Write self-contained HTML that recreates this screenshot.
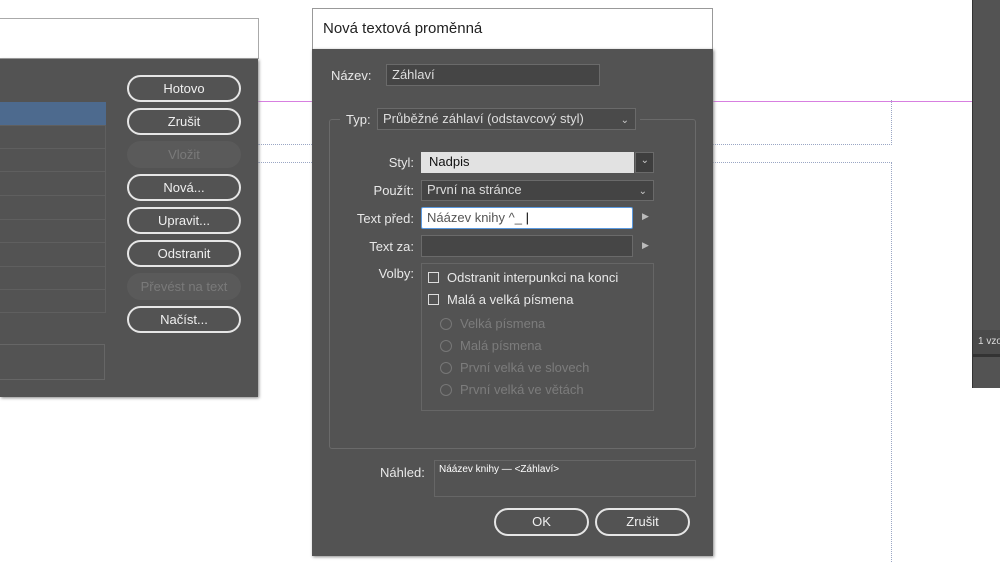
<!DOCTYPE html>
<html><head><meta charset="utf-8"><style>
body{margin:0;width:1000px;height:562px;background:#fff;position:relative;overflow:hidden;font-family:"Liberation Sans",sans-serif;font-size:13px;color:#e8e8e8}
.a{position:absolute;box-sizing:border-box}
.dk{background:#535353}
.btn{position:absolute;box-sizing:border-box;border:2px solid #e6e6e6;border-radius:14px;text-align:center;color:#f0f0f0;font-size:13px}
.dis{border:none;background:#5a5a5a;color:#7a7a7a}
.inp{position:absolute;box-sizing:border-box;background:#454545;border:1px solid #6a6a6a;color:#ddd;padding-left:5px}
.lbl{position:absolute;text-align:right;color:#e8e8e8}
.chev{position:absolute;right:6px;top:2px;font-size:10px;color:#ccc}
.cb{position:absolute;width:11px;height:11px;border:1px solid #ddd;box-sizing:border-box}
.rd{position:absolute;width:12px;height:12px;border:1px solid #777;border-radius:50%;box-sizing:border-box}
.gt{position:absolute;color:#7c7c7c}
</style></head><body>
<div class="a" style="left:258px;top:101px;width:714px;height:1px;background:#d77fe0"></div>
<div class="a" style="left:258px;top:144px;width:634px;border-top:1px dotted #9aa6c4"></div>
<div class="a" style="left:258px;top:162px;width:634px;border-top:1px dotted #9aa6c4"></div>
<div class="a" style="left:891px;top:100px;height:45px;border-left:1px dotted #9aa6c4"></div>
<div class="a" style="left:891px;top:162px;height:400px;border-left:1px dotted #9aa6c4"></div>
<div class="a dk" style="left:972px;top:0;width:28px;height:388px;border-left:1px solid #333"></div>
<div class="a" style="left:973px;top:330px;width:27px;height:24px;background:#4a4a4a;font-size:10px;padding:6px 0 0 5px;color:#ddd;white-space:nowrap;overflow:hidden">1 vzo</div>
<div class="a" style="left:973px;top:354px;width:27px;height:3px;background:#333"></div>
<div class="a" style="left:0;top:18px;width:259px;height:41px;background:#fff;border-top:1px solid #aaa;border-right:1px solid #aaa;border-bottom:1px solid #999"></div>
<div class="a dk" style="left:0;top:59px;width:258px;height:338px;box-shadow:1px 1px 3px #888"></div>
<div class="a" style="left:0;top:102px;width:106px;height:23px;background:#4d6a8e"></div>
<div class="a" style="left:0;top:125px;width:106px;height:188px;border:1px solid #5f5f5f;border-left:none"></div>
<div class="a" style="left:0;top:148px;width:106px;border-top:1px solid #5f5f5f"></div>
<div class="a" style="left:0;top:171px;width:106px;border-top:1px solid #5f5f5f"></div>
<div class="a" style="left:0;top:195px;width:106px;border-top:1px solid #5f5f5f"></div>
<div class="a" style="left:0;top:219px;width:106px;border-top:1px solid #5f5f5f"></div>
<div class="a" style="left:0;top:242px;width:106px;border-top:1px solid #5f5f5f"></div>
<div class="a" style="left:0;top:266px;width:106px;border-top:1px solid #5f5f5f"></div>
<div class="a" style="left:0;top:289px;width:106px;border-top:1px solid #5f5f5f"></div>
<div class="a" style="left:0;top:344px;width:105px;height:36px;border:1px solid #666;border-left:none"></div>
<div class="btn" style="left:127px;top:75px;width:114px;height:27px;line-height:23px">Hotovo</div>
<div class="btn" style="left:127px;top:108px;width:114px;height:27px;line-height:23px">Zrušit</div>
<div class="btn dis" style="left:127px;top:141px;width:114px;height:27px;line-height:27px">Vložit</div>
<div class="btn" style="left:127px;top:174px;width:114px;height:27px;line-height:23px">Nová...</div>
<div class="btn" style="left:127px;top:207px;width:114px;height:27px;line-height:23px">Upravit...</div>
<div class="btn" style="left:127px;top:240px;width:114px;height:27px;line-height:23px">Odstranit</div>
<div class="btn dis" style="left:127px;top:273px;width:114px;height:27px;line-height:27px">Převést na text</div>
<div class="btn" style="left:127px;top:306px;width:114px;height:27px;line-height:23px">Načíst...</div>
<div class="a" style="left:312px;top:8px;width:401px;height:41px;background:#fff;border:1px solid #999;border-bottom:none;color:#222;font-size:15px;padding:11px 0 0 10px">Nová textová proměnná</div>
<div class="a dk" style="left:312px;top:49px;width:401px;height:507px;box-shadow:1px 1px 3px #888"></div>
<div class="lbl" style="left:331px;top:68px">Název:</div>
<div class="inp" style="left:386px;top:64px;width:214px;height:22px;line-height:19px">Záhlaví</div>
<div class="a" style="left:329px;top:119px;width:367px;height:330px;border:1px solid #6a6a6a;border-radius:3px"></div>
<div class="a dk" style="left:340px;top:108px;width:300px;height:22px"></div>
<div class="lbl" style="left:346px;top:112px">Typ:</div>
<div class="inp" style="left:377px;top:108px;width:259px;height:22px;line-height:19px;background:#4a4a4a">Průběžné záhlaví (odstavcový styl)<span class="chev">&#8964;</span></div>
<div class="lbl" style="left:340px;top:155px;width:74px">Styl:</div>
<div class="a" style="left:421px;top:152px;width:213px;height:21px;background:#e2e2e2;color:#111;padding:2px 0 0 8px">Nadpis</div>
<div class="inp" style="left:635px;top:152px;width:19px;height:21px;background:#3e3e3e"><span class="chev" style="right:4px">&#8964;</span></div>
<div class="lbl" style="left:340px;top:183px;width:74px">Použít:</div>
<div class="inp" style="left:421px;top:180px;width:233px;height:21px;line-height:18px;background:#444">První na stránce<span class="chev">&#8964;</span></div>
<div class="lbl" style="left:330px;top:211px;width:84px">Text před:</div>
<div class="a" style="left:421px;top:207px;width:212px;height:22px;background:#fff;border:1px solid #5b9ae0;border-radius:2px;color:#555;padding:2px 0 0 5px">Náázev knihy ^_ <span style="color:#000">|</span></div>
<div class="a" style="left:642px;top:211px;color:#bbb;font-size:9px">&#9654;</div>
<div class="lbl" style="left:330px;top:239px;width:84px">Text za:</div>
<div class="inp" style="left:421px;top:235px;width:212px;height:22px;background:#464646"></div>
<div class="a" style="left:642px;top:240px;color:#bbb;font-size:9px">&#9654;</div>
<div class="lbl" style="left:330px;top:266px;width:84px">Volby:</div>
<div class="a" style="left:421px;top:263px;width:233px;height:148px;border:1px solid #666"></div>
<div class="cb" style="left:428px;top:272px"></div><div class="a" style="left:447px;top:270px">Odstranit interpunkci na konci</div>
<div class="cb" style="left:428px;top:294px"></div><div class="a" style="left:447px;top:292px">Malá a velká písmena</div>
<div class="rd" style="left:440px;top:318px"></div><div class="gt" style="left:460px;top:316px">Velká písmena</div>
<div class="rd" style="left:440px;top:340px"></div><div class="gt" style="left:460px;top:338px">Malá písmena</div>
<div class="rd" style="left:440px;top:362px"></div><div class="gt" style="left:460px;top:360px">První velká ve slovech</div>
<div class="rd" style="left:440px;top:384px"></div><div class="gt" style="left:460px;top:382px">První velká ve větách</div>
<div class="lbl" style="left:380px;top:465px">Náhled:</div>
<div class="a" style="left:434px;top:460px;width:262px;height:37px;border:1px solid #666;font-size:10px;color:#fff;padding:3px 0 0 4px">Náázev knihy — &lt;Záhlaví&gt;</div>
<div class="btn" style="left:494px;top:508px;width:95px;height:28px;line-height:24px">OK</div>
<div class="btn" style="left:595px;top:508px;width:95px;height:28px;line-height:24px">Zrušit</div>
</body></html>
